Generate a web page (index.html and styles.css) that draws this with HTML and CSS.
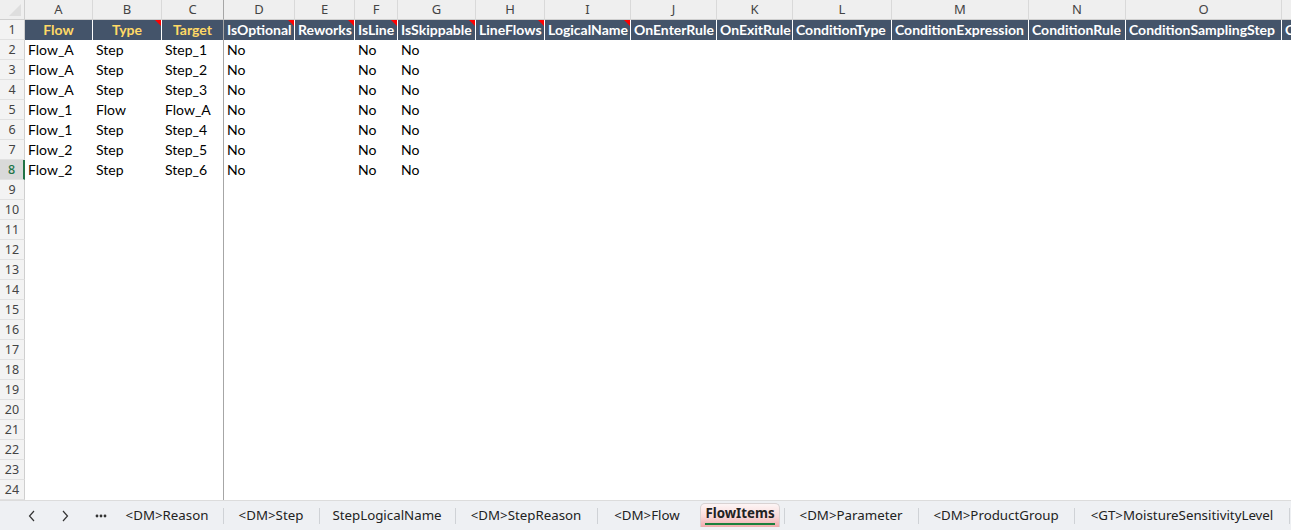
FILE: index.html
```html
<!DOCTYPE html>
<html>
<head>
<meta charset="utf-8">
<link rel="stylesheet" href="styles.css">
</head>
<body>
<div class="sheet">
  <div class="grid">
    <div class="row letters">
      <div class="rh corner"></div>
      <div class="l">A</div><div class="l">B</div><div class="l fz">C</div><div class="l">D</div><div class="l">E</div><div class="l">F</div><div class="l">G</div><div class="l">H</div><div class="l">I</div><div class="l">J</div><div class="l">K</div><div class="l">L</div><div class="l">M</div><div class="l">N</div><div class="l">O</div><div class="l">P</div>
    </div>
    <div class="row head">
      <div class="rh">1</div>
      <div class="h key">Flow</div>
      <div class="h key note">Type</div>
      <div class="h key fzw">Target</div>
      <div class="h note">IsOptional</div>
      <div class="h note">Reworks</div>
      <div class="h note">IsLine</div>
      <div class="h note">IsSkippable</div>
      <div class="h note">LineFlows</div>
      <div class="h note">LogicalName</div>
      <div class="h">OnEnterRule</div>
      <div class="h">OnExitRule</div>
      <div class="h">ConditionType</div>
      <div class="h">ConditionExpression</div>
      <div class="h">ConditionRule</div>
      <div class="h">ConditionSamplingStep</div>
      <div class="h">ConditionSamplingRule</div>
    </div>
    <div class="row"><div class="rh">2</div><div class="c">Flow_A</div><div class="c">Step</div><div class="c fz">Step_1</div><div class="c">No</div><div class="c"></div><div class="c">No</div><div class="c">No</div></div>
    <div class="row"><div class="rh">3</div><div class="c">Flow_A</div><div class="c">Step</div><div class="c fz">Step_2</div><div class="c">No</div><div class="c"></div><div class="c">No</div><div class="c">No</div></div>
    <div class="row"><div class="rh">4</div><div class="c">Flow_A</div><div class="c">Step</div><div class="c fz">Step_3</div><div class="c">No</div><div class="c"></div><div class="c">No</div><div class="c">No</div></div>
    <div class="row"><div class="rh">5</div><div class="c">Flow_1</div><div class="c">Flow</div><div class="c fz">Flow_A</div><div class="c">No</div><div class="c"></div><div class="c">No</div><div class="c">No</div></div>
    <div class="row"><div class="rh">6</div><div class="c">Flow_1</div><div class="c">Step</div><div class="c fz">Step_4</div><div class="c">No</div><div class="c"></div><div class="c">No</div><div class="c">No</div></div>
    <div class="row"><div class="rh">7</div><div class="c">Flow_2</div><div class="c">Step</div><div class="c fz">Step_5</div><div class="c">No</div><div class="c"></div><div class="c">No</div><div class="c">No</div></div>
    <div class="row"><div class="rh sel">8</div><div class="c">Flow_2</div><div class="c">Step</div><div class="c fz">Step_6</div><div class="c">No</div><div class="c"></div><div class="c">No</div><div class="c">No</div></div>
    <div class="row"><div class="rh">9</div><div class="c"></div><div class="c"></div><div class="c fz"></div></div>
    <div class="row"><div class="rh">10</div><div class="c"></div><div class="c"></div><div class="c fz"></div></div>
    <div class="row"><div class="rh">11</div><div class="c"></div><div class="c"></div><div class="c fz"></div></div>
    <div class="row"><div class="rh">12</div><div class="c"></div><div class="c"></div><div class="c fz"></div></div>
    <div class="row"><div class="rh">13</div><div class="c"></div><div class="c"></div><div class="c fz"></div></div>
    <div class="row"><div class="rh">14</div><div class="c"></div><div class="c"></div><div class="c fz"></div></div>
    <div class="row"><div class="rh">15</div><div class="c"></div><div class="c"></div><div class="c fz"></div></div>
    <div class="row"><div class="rh">16</div><div class="c"></div><div class="c"></div><div class="c fz"></div></div>
    <div class="row"><div class="rh">17</div><div class="c"></div><div class="c"></div><div class="c fz"></div></div>
    <div class="row"><div class="rh">18</div><div class="c"></div><div class="c"></div><div class="c fz"></div></div>
    <div class="row"><div class="rh">19</div><div class="c"></div><div class="c"></div><div class="c fz"></div></div>
    <div class="row"><div class="rh">20</div><div class="c"></div><div class="c"></div><div class="c fz"></div></div>
    <div class="row"><div class="rh">21</div><div class="c"></div><div class="c"></div><div class="c fz"></div></div>
    <div class="row"><div class="rh">22</div><div class="c"></div><div class="c"></div><div class="c fz"></div></div>
    <div class="row"><div class="rh">23</div><div class="c"></div><div class="c"></div><div class="c fz"></div></div>
    <div class="row"><div class="rh">24</div><div class="c"></div><div class="c"></div><div class="c fz"></div></div>
  </div>
  <div class="tabs">
    <div class="nav">
      <span class="navbtn"><svg width="8" height="12" viewBox="0 0 8 12"><path d="M6 1 L1.5 6 L6 11" fill="none" stroke="#333" stroke-width="1.2"/></svg></span>
      <span class="navbtn"><svg width="8" height="12" viewBox="0 0 8 12"><path d="M2 1 L6.5 6 L2 11" fill="none" stroke="#333" stroke-width="1.2"/></svg></span>
      <span class="navbtn dots"><svg width="12" height="4" viewBox="0 0 12 4"><circle cx="2" cy="2" r="1.4" fill="#333"/><circle cx="6" cy="2" r="1.4" fill="#333"/><circle cx="10" cy="2" r="1.4" fill="#333"/></svg></span>
    </div>
    <div class="tab t-reason">&lt;DM&gt;Reason</div>
    <div class="tab sep t-step">&lt;DM&gt;Step</div>
    <div class="tab sep t-logical">StepLogicalName</div>
    <div class="tab sep t-stepreason">&lt;DM&gt;StepReason</div>
    <div class="tab sep t-flow">&lt;DM&gt;Flow</div>
    <div class="tab active"><span>FlowItems</span></div>
    <div class="tab sep t-param">&lt;DM&gt;Parameter</div>
    <div class="tab sep t-product">&lt;DM&gt;ProductGroup</div>
    <div class="tab sep last t-msl">&lt;GT&gt;MoistureSensitivityLevel</div>
  </div>
</div>
</body>
</html>
```
FILE: styles.css
```css
* { box-sizing: border-box; }
html, body { margin: 0; padding: 0; background: #fff; }
.sheet {
  width: 1291px;
  height: 530px;
  overflow: hidden;
  display: flex;
  flex-direction: column;
}
.grid {
  height: 500px;
  overflow: hidden;
  display: flex;
  flex-direction: column;
}
.row {
  display: grid;
  grid-template-columns: 25px 68px 69px 62px 71px 60px 43px 78px 69px 86px 86px 76px 99px 137px 97px 156px 80px;
  height: 20px;
  flex: none;
}
.rh {
  background: #f3f3f3;
  border-right: 1px solid #cfcfcf;
  border-bottom: 1px solid #e1e1e1;
  font-family: "Noto Sans", "Open Sans", sans-serif;
  font-size: 12.5px;
  color: #444;
  text-align: center;
  line-height: 19px;
}
.rh.sel {
  background: #d9d9d9;
  color: #217346;
  font-weight: 500;
  border-right: 2px solid #217346;
}
.corner {
  position: relative;
  background: #efefef;
  border-bottom: 1px solid #cfcfcf;
}
.corner::after {
  content: "";
  position: absolute;
  right: 3px;
  bottom: 3px;
  width: 0;
  height: 0;
  border-left: 12px solid transparent;
  border-bottom: 12px solid #dedede;
}
.letters .l {
  background: #efefef;
  border-right: 1px solid #d9d9d9;
  border-bottom: 1px solid #cfcfcf;
  font-family: "Noto Sans", "Open Sans", sans-serif;
  font-size: 13px;
  color: #444;
  text-align: center;
  line-height: 19px;
}
.letters .l.fz { border-right-color: #a6a6a6; }
.head .h {
  position: relative;
  background: #44546a;
  border-right: 1px solid #ffffff;
  color: #ffffff;
  font-family: "Lato", "Open Sans", sans-serif;
  font-weight: bold;
  font-size: 14px;
  line-height: 20px;
  padding-left: 3px;
  white-space: nowrap;
  overflow: hidden;
}
.head .h.key {
  color: #ffd966;
  text-align: center;
  padding-left: 0;
}
.head .h.fzw { border-right: 1px solid #a6a6a6; }
.head .h.note::after {
  content: "";
  position: absolute;
  top: 0;
  right: 0;
  width: 0;
  height: 0;
  border-left: 6px solid transparent;
  border-top: 6px solid #ff0000;
}
.c {
  font-family: "Lato", "Open Sans", sans-serif;
  font-size: 14px;
  color: #000;
  line-height: 20px;
  padding-left: 3px;
  white-space: nowrap;
  overflow: hidden;
}
.c.fz { border-right: 1px solid #a6a6a6; }

.tabs {
  height: 30px;
  flex: none;
  display: flex;
  align-items: stretch;
  background: #eef0f3;
  border-top: 1px solid #dcdcdc;
  font-family: "Noto Sans", "Open Sans", sans-serif;
  font-size: 13.3px;
  color: #222;
  white-space: nowrap;
}
.nav {
  display: flex;
  align-items: center;
  width: 111px;
  padding-left: 27px;
  flex: none;
}
.navbtn {
  display: flex;
  align-items: center;
  justify-content: center;
  width: 9px;
  height: 14px;
  margin-right: 24px;
}
.navbtn.dots { width: 12px; margin-right: 0; margin-left: 2px; }
.tab {
  position: relative;
  display: flex;
  align-items: center;
  justify-content: center;
  padding-bottom: 1px;
  flex: none;
}
.t-reason { width: 112px; }
.t-step { width: 96px; }
.t-logical { width: 136px; }
.t-stepreason { width: 142px; }
.t-flow { width: 100px; }
.t-param { width: 134px; }
.t-product { width: 156px; }
.t-msl { width: 216px; }
.tab.sep::before {
  content: "";
  position: absolute;
  left: 0;
  top: 7px;
  height: 16px;
  width: 1px;
  background: #cfd2d6;
}
.tab.last::after {
  content: "";
  position: absolute;
  right: 0;
  top: 7px;
  height: 16px;
  width: 1px;
  background: #cfd2d6;
}
.tab.active {
  width: 80px;
  margin: 2px 4px 3px 3px;
  border: 1px solid #d9d2d2;
  border-bottom: none;
  border-radius: 5px 5px 0 0;
  background: linear-gradient(to bottom, #fdf5f5 0%, #f8d9d9 55%, #efaaaa 100%);
  font-weight: bold;
  color: #222;
}
.tab.active span {
  display: inline-block;
  border-bottom: 2px solid #1a7f3c;
  line-height: 17px;
  padding-bottom: 1px;
}
```
